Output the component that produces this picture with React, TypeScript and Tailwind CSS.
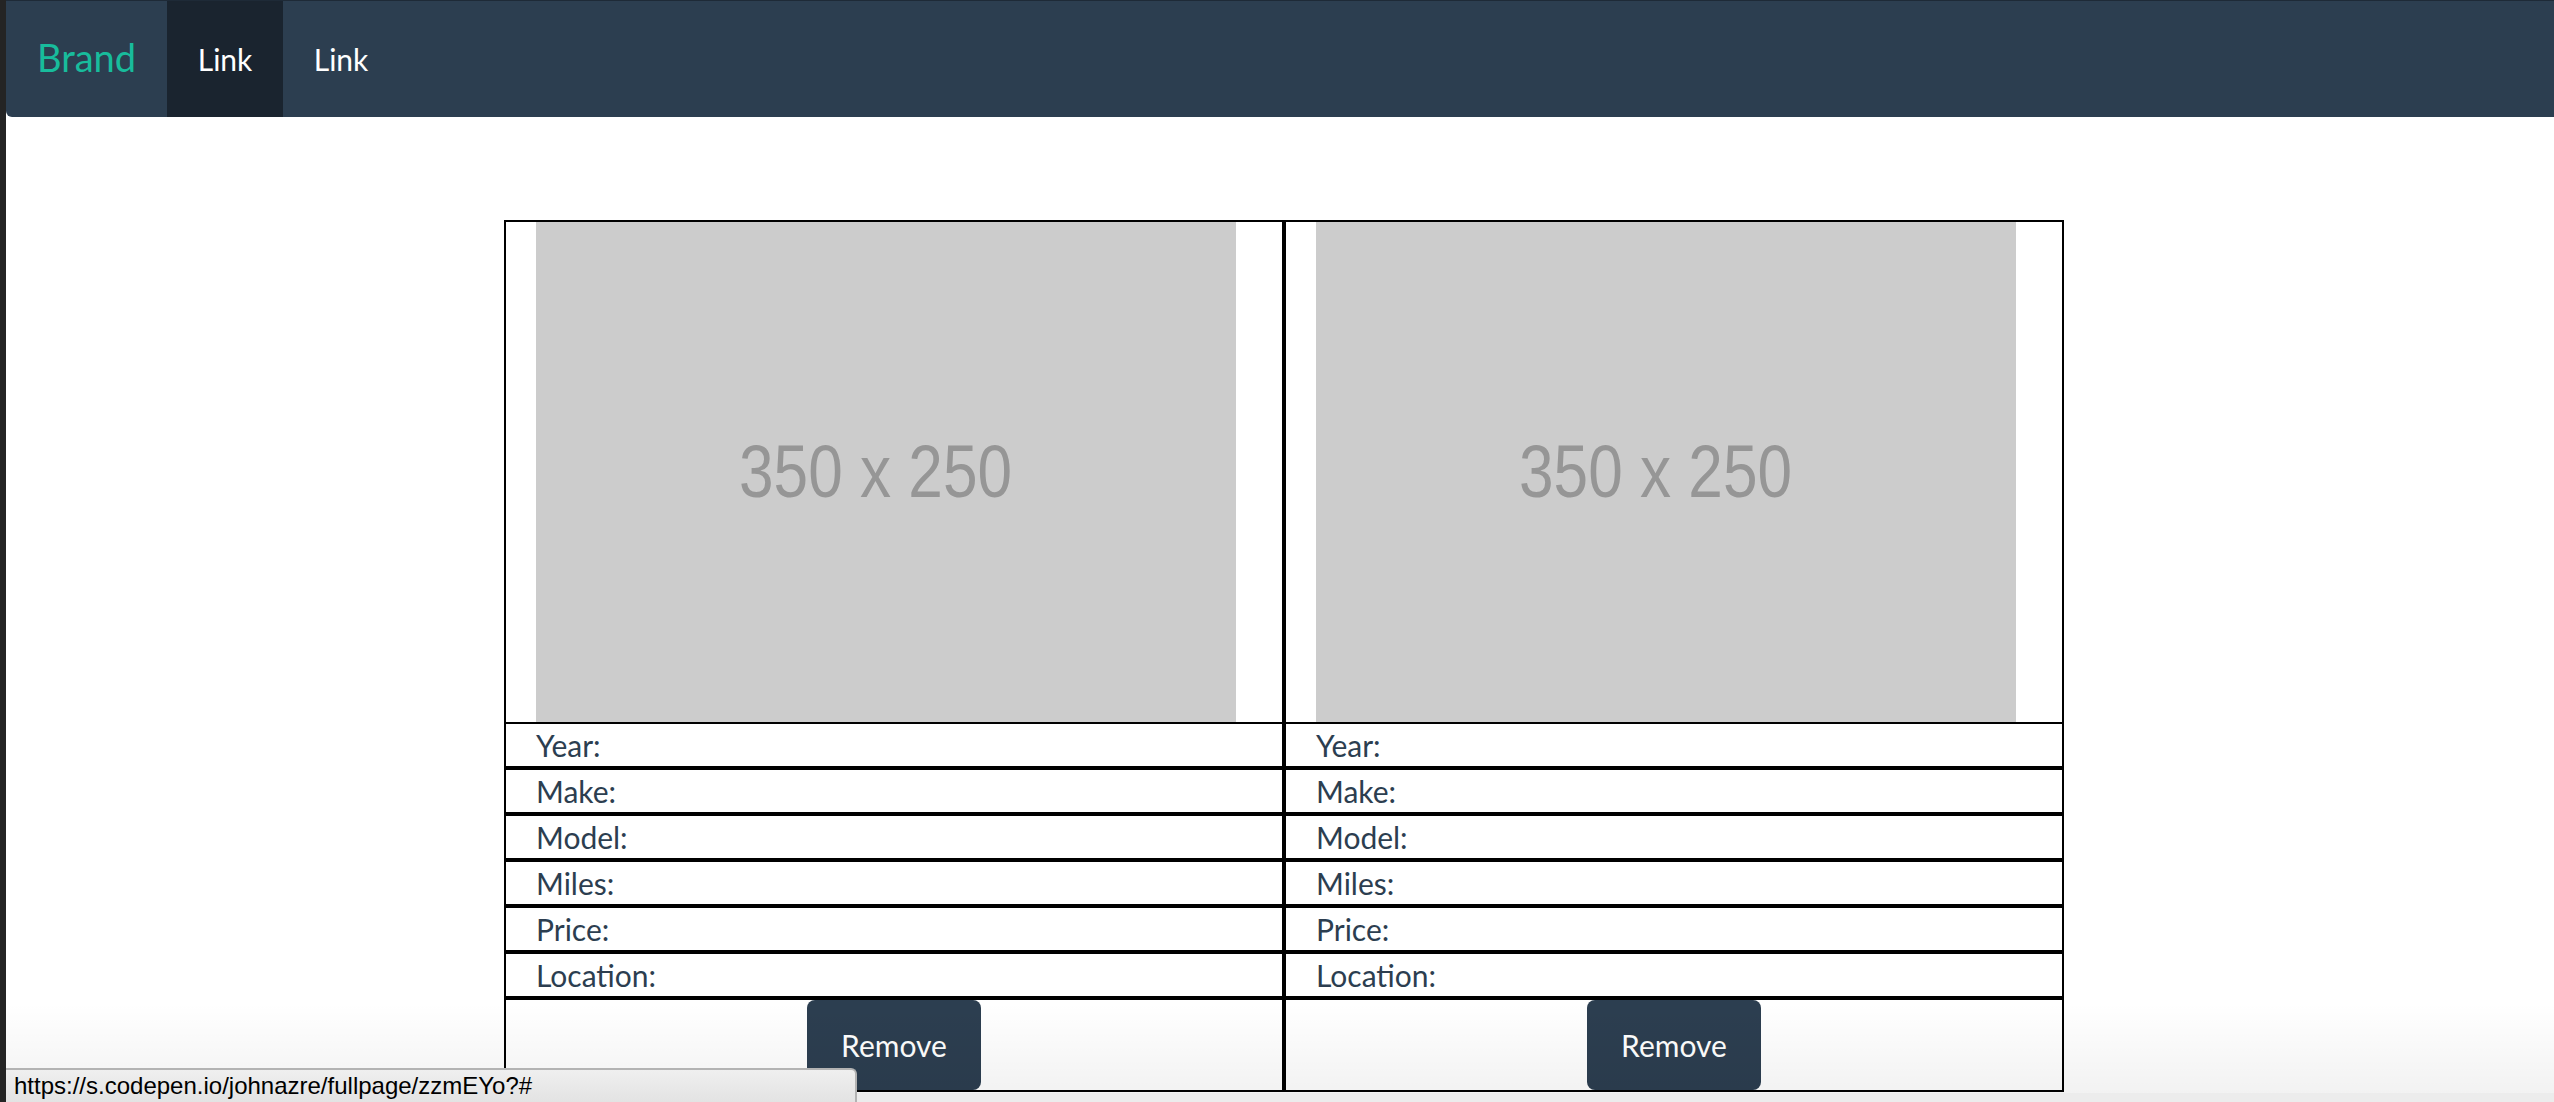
import React from "react";

const labels = ["Year:", "Make:", "Model:", "Miles:", "Price:", "Location:"];

function Card() {
  return (
    <div className="w-[780px] border-2 border-black bg-white">
      <div className="h-[500px] pl-[30px]">
        <div className="flex h-[500px] w-[700px] items-center justify-center bg-[#cccccc] pr-[20px]">
          <span
            className="inline-block scale-x-[0.84] text-[74px] leading-none text-[#969696]"
            style={{ fontFamily: '"Liberation Sans", Arial, sans-serif' }}
          >
            350 x 250
          </span>
        </div>
      </div>
      {labels.map((l, i) => (
        <div
          key={l}
          className={`${i === 0 ? "h-[44px] border-t-2" : "h-[46px] border-t-4"} border-black pl-[30px] text-[30px] leading-[42px] text-[#2c3e50]`}
        >
          {l}
        </div>
      ))}
      <div className="flex justify-center border-t-4 border-black">
        <button className="h-[90px] w-[174px] rounded-[8px] bg-[#2c3e50] text-[30px] text-white">
          Remove
        </button>
      </div>
    </div>
  );
}

export default function App() {
  return (
    <div
      className="relative flex h-[1102px] w-full overflow-hidden bg-white"
      style={{ fontFamily: "Lato, 'Noto Sans', sans-serif" }}
    >
      <div className="h-full w-[6px] shrink-0 bg-[#242424]" />
      <div className="flex min-w-0 flex-1 flex-col">
        <nav className="flex h-[117px] shrink-0 items-stretch rounded-bl-[6px] border-t border-[#1e2a37] bg-[#2c3e50]">
          <a className="flex items-center px-[31px] pb-[4px] text-[38px] text-[#18bc9c]" href="#">
            Brand
          </a>
          <a className="flex w-[116px] items-center justify-center bg-[#1a242f] text-[30px] text-white" href="#">
            Link
          </a>
          <a className="flex w-[116px] items-center justify-center text-[30px] text-white" href="#">
            Link
          </a>
        </nav>
        <div className="pl-[498px] pt-[103px]">
          <div className="flex">
            <Card />
            <Card />
          </div>
        </div>
      </div>

      <div className="pointer-events-none absolute bottom-[9px] left-[6px] right-0 h-[90px] bg-gradient-to-b from-transparent to-[rgba(0,0,0,0.05)]" />
      <div className="pointer-events-none absolute bottom-0 left-[6px] right-0 h-[9px] bg-[#ececec]" />

      <div
        className="absolute bottom-0 left-[6px] flex h-[34px] w-[851px] items-center rounded-tr-[6px] border-r-2 border-t-2 border-[#b3b3b3] bg-gradient-to-b from-[#efefef] to-[#e3e3e3] pl-[8px] text-[24px] text-black"
        style={{ fontFamily: '"Liberation Sans", Arial, sans-serif' }}
      >
        https://s.codepen.io/johnazre/fullpage/zzmEYo?#
      </div>
    </div>
  );
}
